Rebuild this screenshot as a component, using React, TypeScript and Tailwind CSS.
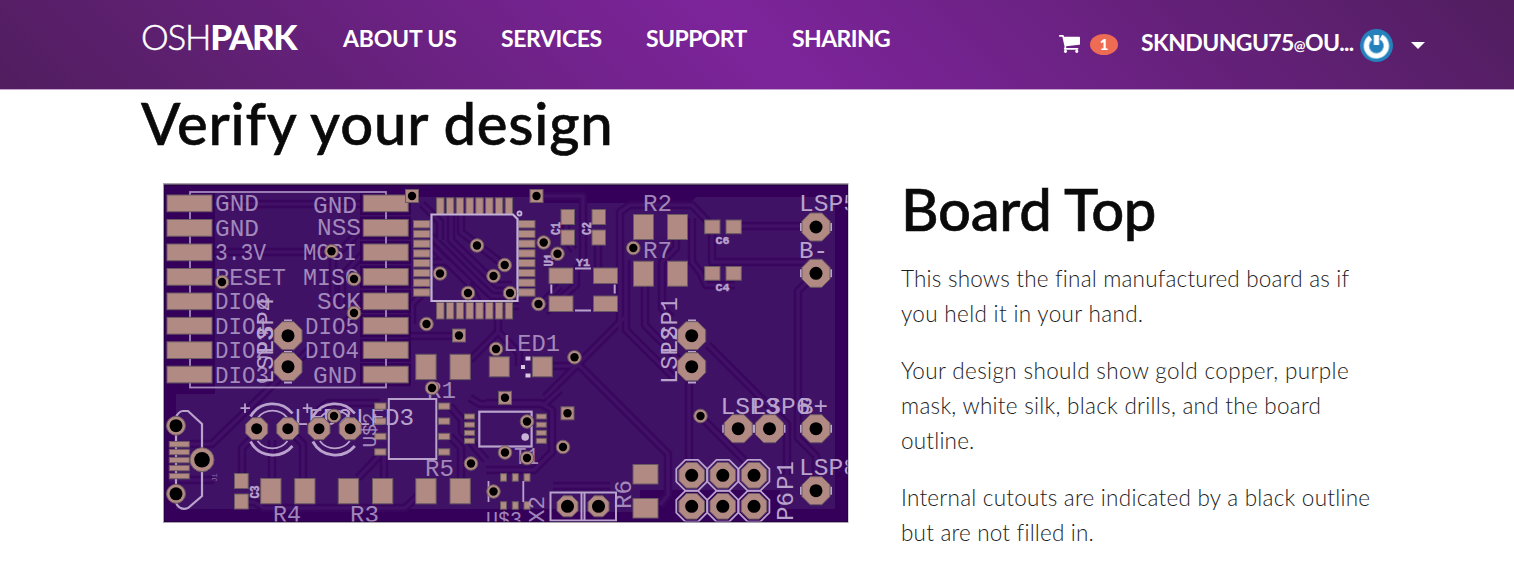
import React from "react";

const PAD = "#b28a84";
const EDGE = "#6a5a62";
const SILK = "#b9a3cd";
const DARK = "#35005a";
const POUR = "#3f1266";

type Pt = [number, number];

function Pad({ x, y, w, h }: { x: number; y: number; w: number; h: number }) {
  return <rect x={x} y={y} width={w} height={h} fill={PAD} stroke={EDGE} strokeWidth={1} />;
}

function octagon(cx: number, cy: number, r: number) {
  const k = r * 0.414;
  return [
    [-k, -r], [k, -r], [r, -k], [r, k], [k, r], [-k, r], [-r, k], [-r, -k],
  ].map(([dx, dy]) => `${cx + dx},${cy + dy}`).join(" ");
}

function Oct({ x, y, r = 14, hole = 6.5 }: { x: number; y: number; r?: number; hole?: number }) {
  return (
    <g>
      <polygon points={octagon(x, y, r)} fill={PAD} stroke={EDGE} />
      <circle cx={x} cy={y} r={hole} fill="#000" />
    </g>
  );
}

function Round({ x, y, r = 6.8, hole = 4.2 }: { x: number; y: number; r?: number; hole?: number }) {
  return (
    <g>
      <circle cx={x} cy={y} r={r} fill={PAD} stroke={EDGE} />
      <circle cx={x} cy={y} r={hole} fill="#000" />
    </g>
  );
}

function Silk({ x, y, t, w, size = 24.5, rot = false, bold = false, o = 0.82 }: {
  x: number; y: number; t: string; w: number; size?: number; rot?: boolean; bold?: boolean; o?: number;
}) {
  return (
    <text
      x={x}
      y={y}
      fill={SILK}
      stroke={bold ? SILK : "none"}
      strokeWidth={bold ? 0.5 : 0}
      opacity={o}
      fontSize={size}
      fontWeight={bold ? 700 : 400}
      fontFamily='"Liberation Mono", monospace'
      textLength={w}
      lengthAdjust="spacingAndGlyphs"
      transform={rot ? `rotate(-90 ${x} ${y})` : undefined}
    >
      {t}
    </text>
  );
}

const rows = [195, 219.5, 244, 268.5, 293, 317.4, 341.8, 366.2];
const eight = [0, 1, 2, 3, 4, 5, 6, 7];

const leftLabels: [string, number][] = [
  ["GND", 44], ["GND", 44], ["3.3V", 51], ["RESET", 71], ["DIO0", 54], ["DIO1", 54], ["DIO2", 54], ["DIO3", 54],
];
const rightLabels: [string, number, number, number][] = [
  ["GND", 313, 44, 213], ["NSS", 317, 44, 235], ["MOSI", 303, 54, 260], ["MISO", 303, 56, 285],
  ["SCK", 317, 44, 309], ["DIO5", 305, 54, 334], ["DIO4", 305, 54, 358], ["GND", 313, 44, 382.5],
];

const vias: Pt[] = [
  [477, 245.5], [440, 273.5], [504.7, 265], [493.5, 276], [468, 293], [510, 293], [543.7, 242.5], [557.5, 253.7],
  [538.5, 304], [426.5, 324], [496, 349], [574.5, 357.3], [331.5, 251.3], [222, 282], [354, 279], [354, 313],
  [633.3, 248], [432, 388], [563, 447], [471, 463.5], [505, 452.5], [527, 421.5], [527, 458], [493.5, 491.5],
  [334, 416], [700.5, 416],
];
const squareVias: Pt[] = [[412, 196], [536.5, 196], [459, 335.5], [505, 397.8], [567.5, 413.3]];

const traces = [
  "M212 204H363", "M212 252H331",
  "M422 204L440 222V240", "M451 214V240L497 285H512", "M461 214V232L504 265",
  "M431 236L480 285L492 296H519", "M431 246L468 283L480 306H519", "M431 262H448L470 283",
  "M541 196H583V262L576 270V285L545 312", "M431 285L412 304V324",
  "M363 254L342 276V310", "M363 228L333 258V310",
  "M363 303L340 330",
  "M498 319V332L519 353V366", "M498 332L470 360", "M545 300L560 286",
  "M408 336H459", "M566 224V240L574 250", "M598 245V268",
  "M620 330V212L630 205H692L712 226", "M692 218V262L700 272L706 285H735",
  "M741 226H806", "M712 234V262H806",
  "M676 240V248L662 262V308L672 318",
  "M645 286V325L689 370V475", "M626 260V330L674 378",
  "M708 345L787 424V475",
  "M816 273L798 291V438L816 456V480", "M626 316L545 397",
  "M553 366H580L668 454V495L660 505",
  "M700 416L754 470",
  "M214 480H169", "M189 444H212L313 346",
  "M242 473V448L256 434", "M272 478V440", "M303 478V444L288 429",
  "M319 429V410L328 403H380", "M380 455L358 478", "M384 455V478",
  "M241 502H254L264 508H405L420 494",
  "M450 406L462 420V432L486 460",
  "M450 436L461 448V478",
  "M470 398L480 404H545L560 390",
  "M486 470H534L552 452V410L540 403H486", "M553 486H610",
];

function Board() {
  return (
    <svg viewBox="163 183 686 341" className="block h-[341px] w-[686px]">
      <rect x="163" y="183" width="686" height="341" fill="#fff" />
      <rect x="163" y="183" width="685.5" height="340" fill="#aaa3ad" />
      <rect x="164" y="184.5" width="684" height="337.5" fill="#1c0030" />
      <svg x="164.500" y="185.500" width="683" height="336" viewBox="164.500 185.500 683 336">
        <rect x="164" y="185" width="684" height="337" fill={DARK} />
        <path
          d="M215 193H384V197H544V203H690L696 197H835V509H780V490H640V512H560V509H176V394H215Z"
          fill={POUR}
        />
        <g fill="none" strokeLinejoin="round">
          {traces.map((d) => <path key={d} d={d} stroke="#38065d" strokeWidth={8.5} />)}
          {traces.map((d) => <path key={d} d={d} stroke="#401166" strokeWidth={3.6} />)}
        </g>

        {/* Radio module footprint */}
        {rows.map((y) => (
          <g key={y}>
            <rect x="165" y={y - 3} width="50" height="23" fill={DARK} />
            <rect x="360" y={y - 3} width="51" height="23" fill={DARK} />
          </g>
        ))}
        <rect x="190" y="192" width="196" height="195.500" fill="none" stroke={SILK} strokeWidth="1.8" opacity={0.85} />
        {rows.map((y, i) => (
          <g key={y}>
            <Pad x={167} y={y} w={45} h={16.7} />
            <Pad x={363.2} y={y} w={45} h={16.7} />
            <Silk x={215} y={y + 16.3} t={leftLabels[i][0]} w={leftLabels[i][1]} />
          </g>
        ))}
        {rightLabels.map(([t, x, w, y]) => <Silk key={y} x={x} y={y} t={t} w={w} />)}
        <Silk x={273} y={384} t="LSP3" w={57} rot o={1} />
        <Silk x={273} y={354} t="LSP4" w={57} rot o={1} />
        <path d="M284 320.500h8M284 352h8M284 382.500h8" stroke={SILK} strokeWidth="2" />
        <Oct x={288} y={335.7} />
        <Oct x={288} y={366.7} />

        {/* Microcontroller */}
        {eight.map((i) => (
          <g key={i}>
            <Pad x={436.6 + i * 9.8} y={197.8} w={7.4} h={16.5} />
            <Pad x={436.6 + i * 9.8} y={302.5} w={7.4} h={16.5} />
            <Pad x={413.5} y={220.5 + i * 9.75} w={16.5} h={7.4} />
            <Pad x={518.5} y={220.5 + i * 9.75} w={16.5} h={7.4} />
          </g>
        ))}
        <path d="M431.500 214.500H513L517.500 219V301H431.500Z" fill="none" stroke="#c4b2d5" strokeWidth="2.200" />
        <circle cx="519.500" cy="213.500" r="2" fill="none" stroke="#c4b2d5" strokeWidth="1.800" />

        {/* Crystal and decoupling capacitors */}
        <Pad x={561} y={209.5} w={13.5} h={15} />
        <Pad x={561} y={230} w={13.5} h={15} />
        <Pad x={592} y={209.5} w={13.5} h={15} />
        <Pad x={592} y={230} w={13.5} h={15} />
        <Silk x={559.5} y={235} t="C1" w={13} size={13} rot bold o={1} />
        <Silk x={590.5} y={235} t="C2" w={13} size={13} rot bold o={1} />
        <Silk x={553} y={266.5} t="U1" w={13} size={12} rot bold o={1} />
        <Silk x={576} y={266} t="Y1" w={14} size={11} bold o={1} />
        <Pad x={549} y={268} w={24} h={15.5} />
        <Pad x={593.5} y={268} w={24} h={15.5} />
        <Pad x={549} y={296} w={24} h={15.5} />
        <Pad x={593.5} y={296} w={24} h={15.5} />
        <path d="M575 268.500h16M575 310.500h16M551.300 284.500v9M614.700 284.500v9" stroke={SILK} strokeWidth="2" />

        {/* Right-hand passives */}
        <Silk x={643} y={211} t="R2" w={29} />
        <Silk x={643} y={257.5} t="R7" w={29} />
        <Pad x={633.5} y={214.5} w={20} h={25} />
        <Pad x={667.5} y={214.5} w={20} h={25} />
        <Pad x={633.5} y={261.2} w={20} h={25} />
        <Pad x={667.5} y={261.2} w={20} h={25} />
        {[220, 266.5].map((y, i) => (
          <g key={y}>
            <Pad x={704.7} y={y} w={15.3} h={13.7} />
            <Pad x={726} y={y} w={15.3} h={13.7} />
            <Silk x={715.5} y={y + 24.2} t={i === 0 ? "C6" : "C4"} w={14} size={11.5} bold o={1} />
          </g>
        ))}
        <Silk x={799} y={211} t="LSP5" w={59} o={1} />
        <Silk x={799} y={257.5} t="B-" w={29} o={1} />
        <Silk x={720.5} y={413.5} t="LSP3" w={59} o={1} />
        <Silk x={751.5} y={413.5} t="LSP6" w={59} o={1} />
        <Silk x={799} y={413.5} t="B+" w={29} o={1} />
        <Silk x={799} y={475} t="LSP8" w={59} o={1} />
        {([[816, 227], [816, 273.3], [738.2, 428.7], [769.5, 428.7], [816, 428.7], [816, 490.7]] as Pt[]).map(([x, y]) => (
          <g key={`${x}-${y}`}>
            <path d={`M${x - 15} ${y - 4}v8M${x + 15} ${y - 4}v8`} stroke={SILK} strokeWidth="2" />
            <Oct x={x} y={y} />
          </g>
        ))}
        <Silk x={677} y={384} t="LSP2" w={57} rot o={1} />
        <Silk x={677} y={354} t="LSP1" w={57} rot o={1} />
        <path d="M688 320.500h8M688 352h8M688 382.500h8" stroke={SILK} strokeWidth="2" />
        <Oct x={691.7} y={335.7} />
        <Oct x={691.7} y={366.7} />

        {/* Indicator LEDs */}
        <Silk x={503} y={351} t="LED1" w={57} />
        <Pad x={415.8} y={354.3} w={20.3} h={25.3} />
        <Pad x={450} y={354.3} w={20.3} h={25.3} />
        <Pad x={489.3} y={356.8} w={20} h={20} />
        <Pad x={532.3} y={356.8} w={20} h={20} />
        <path d="M525.500 356.500h5v4h-5zM521 365h4v4h-4zM525.500 373.500h5v4h-5z" fill="#d8c8e0" />
        <Silk x={427} y={398} t="R1" w={29} />
        <Silk x={294} y={424.5} t="LED2" w={58} o={1} />
        <Silk x={356} y={424.5} t="LED3" w={58} o={1} />
        {[272.5, 334.8].map((x) => (
          <g key={x} fill="none" stroke={SILK}>
            <path d={`M${x - 27.5} 403.500v9.500M${x - 32} 408.200h9.500`} strokeWidth="1.800" />
            <path
              d={`M${x - 22} 416.500A25.500 25.500 0 0 1 ${x + 20} 413.500M${x - 22} 441.500A25.500 25.500 0 0 0 ${x + 20} 446`}
              strokeWidth="2.800"
            />
            <path
              d={`M${x - 15} 418A19 19 0 0 1 ${x + 15} 418M${x - 15} 441A19 19 0 0 0 ${x + 15} 441`}
              strokeWidth="1.800"
            />
          </g>
        ))}
        {[256.7, 287.8, 319, 350.2].map((x) => <Oct key={x} x={x} y={428.7} r={11} hole={5.5} />)}

        {/* USB connector */}
        <path
          d="M176 417Q179 411 183 411H188L202 424V496L188 508Q180 511 176 503M176 434V485"
          fill="none"
          stroke={SILK}
          strokeWidth="2.200"
        />
        {[441.5, 449.3, 457.3, 465.3, 473.3].map((y) => <Pad key={y} x={169.3} y={y} w={20} h={5.5} />)}
        <Round x={176} y={425.7} r={9.5} hole={6.5} />
        <Round x={176} y={493.8} r={9.5} hole={6.5} />
        <Round x={202} y={459.7} r={12} hole={7.8} />
        <Silk x={217} y={481.5} t="J1" w={8} size={8} rot o={0.6} />

        {/* Bottom row passives */}
        <Pad x={234.5} y={473.5} w={13.7} h={15} />
        <Pad x={234.5} y={494} w={13.7} h={15} />
        <Silk x={259} y={498.5} t="C3" w={13} size={12} rot bold o={1} />
        {[260.7, 294.7, 338.3, 372.5, 415.8, 450].map((x) => <Pad key={x} x={x} y={478.5} w={20.3} h={25.3} />)}
        <Silk x={273} y={522} t="R4" w={28} />
        <Silk x={350} y={522} t="R3" w={29} />
        <Silk x={425} y={475.5} t="R5" w={29} />

        {/* Driver ICs */}
        {[403, 418, 433.3, 448.8].map((y) => (
          <g key={y}>
            <Pad x={374.7} y={y} w={11.3} h={6.3} />
            <Pad x={438.5} y={y} w={11.3} h={6.3} />
          </g>
        ))}
        <rect x="388.800" y="399" width="47.500" height="60" fill="none" stroke={SILK} strokeWidth="2" />
        <Silk x={376} y={447.5} t="U$2" w={35} size={20} rot />
        {[414, 422.2, 430.3, 438.3].map((y) => (
          <g key={y}>
            <Pad x={464.5} y={y} w={10} h={5} />
            <Pad x={536.3} y={y} w={10} h={5} />
          </g>
        ))}
        <rect x="479.300" y="411.700" width="52.300" height="34.800" fill="none" stroke={SILK} strokeWidth="2.200" />
        <circle cx="525.200" cy="437" r="3.800" fill="#c8b4d4" />
        <Silk x={514} y={464} t="T1" w={25} />
        {[501, 512.8, 524.5].map((x) => (
          <g key={x}>
            <Pad x={x - 0.5} y={473.7} w={6} h={7.5} />
            <Pad x={x - 0.5} y={501.7} w={6} h={7.5} />
          </g>
        ))}
        <path d="M488.500 481v21M523.300 481v21" stroke={SILK} strokeWidth="1.800" />
        <Silk x={486} y={527} t="U$3" w={36} size={22} />
        <Silk x={544} y={523} t="X2" w={27} size={22} rot />
        <path d="M550.500 492.500H616V520.500H550.500ZM581.500 492.500V520.500M584.500 492.500V520.500" fill="none" stroke={SILK} strokeWidth="2" />
        <Oct x={567.5} y={506.3} r={10.5} />
        <Oct x={598.5} y={506.3} r={10.5} />
        <Silk x={630.5} y={509} t="R6" w={29} rot />
        <Pad x={633} y={464.5} w={25} h={19.5} />
        <Pad x={633} y={498.5} w={25} h={19.5} />

        {/* Programming header */}
        {[691.7, 722.8, 754].map((x) => [475.3, 506.3].map((y) => (
          <g key={`${x}-${y}`}>
            <polygon points={octagon(x, y, 15.4)} fill="none" stroke={SILK} strokeWidth="1.800" />
            <Oct x={x} y={y} r={12.8} />
          </g>
        )))}
        <Silk x={793} y={521} t="P6" w={29} rot o={1} />
        <Silk x={793} y={490} t="P1" w={29} rot o={1} />

        {squareVias.map(([x, y]) => (
          <g key={x}>
            <Pad x={x - 6.5} y={y - 6.5} w={13} h={13} />
            <circle cx={x} cy={y} r="4.200" fill="#000" />
          </g>
        ))}
        {vias.map(([x, y]) => <Round key={`${x}-${y}`} x={x} y={y} />)}
      </svg>
    </svg>
  );
}

function CartIcon() {
  return (
    <svg viewBox="0 256 1664 1408" className="h-[18px] w-[21px]" fill="#fff">
      <path d="M640 1536q0 52-38 90t-90 38-90-38-38-90 38-90 90-38 90 38 38 90zm896 0q0 52-38 90t-90 38-90-38-38-90 38-90 90-38 90 38 38 90zm128-1088v512q0 24-16.500 42.500t-40.500 21.500l-1044 122q13 60 13 70 0 16-24 64h920q26 0 45 19t19 45-19 45-45 19h-1024q-26 0-45-19t-19-45q0-11 8-31.500t16-36 21.500-40 15.500-29.500l-177-823h-204q-26 0-45-19t-19-45 19-45 45-19h256q16 0 28.500 6.500t19.500 15.500 13 24.500 8 26 5.500 29.500 4.500 26h1201q26 0 45 19t19 45z" />
    </svg>
  );
}

function Header() {
  return (
    <header className="flex h-[90px] items-start border-b border-[#c4a3cd] bg-[linear-gradient(45deg,#511e5f_0%,#7d249b_50%,#511e5f_100%)] bg-origin-border pl-[141px] text-white">
      <div className="mt-[14px] flex h-[45px] w-[202px] items-center whitespace-nowrap text-[35px] leading-[45px]">
        <span className="font-light tracking-[-1.2px] [-webkit-text-stroke:0.5px_white]">OSH</span>
        <span className="font-black tracking-[-1.5px]">PARK</span>
      </div>
      <nav className="mt-[23px] flex whitespace-nowrap text-[23px] font-bold leading-[30px]">
        <a className="w-[158px] tracking-[-0.2px]">ABOUT US</a>
        <a className="w-[145px] tracking-[-0.4px]">SERVICES</a>
        <a className="w-[146px] tracking-[-0.6px]">SUPPORT</a>
        <a className="w-[267px] tracking-[-0.6px]">SHARING</a>
      </nav>
      <div className="mt-[28px] flex h-[34px] items-center">
        <div className="-mt-[2px]"><CartIcon /></div>
        <span className="-mt-[1px] ml-[10px] flex h-[21px] w-[28px] items-center justify-center rounded-[50%] bg-[#ee6c54] text-[15px] font-black">1</span>
        <span className="-mt-[5px] ml-[23px] flex w-[219px] items-baseline whitespace-nowrap text-[23px] font-bold tracking-[-0.6px]">
          SKNDUNGU75<span className="text-[14px]">@</span>OU...
        </span>
        <svg viewBox="0 0 33 33" className="h-[33px] w-[33px]">
          <circle cx="16.500" cy="16.500" r="16.500" fill="#2481bb" />
          <path d="M10.500 8.800A10 10 0 1 0 21 8M16.500 6V16" fill="none" stroke="#8cc3e2" strokeWidth="6.200" />
          <path d="M10.500 8.800A10 10 0 1 0 21 8M16.500 6V16" fill="none" stroke="#fff" strokeWidth="4.400" />
        </svg>
        <svg viewBox="0 0 14 7" className="ml-[18px] h-[7px] w-[14px]"><path d="M0 0H14L7 7Z" fill="#fff" /></svg>
      </div>
    </header>
  );
}

export default function App() {
  return (
    <div className="h-[571px] w-[1514px] overflow-hidden bg-white font-['Lato',sans-serif] text-[#0a0a0a]">
      <Header />
      <main className="pl-[141px]">
        <h1 className="-mt-[3px] h-[96px] whitespace-nowrap text-[58px] font-medium leading-[72px] tracking-[0.8px] [-webkit-text-stroke:0.6px_#0a0a0a]">Verify your design</h1>
        <div className="flex">
          <div className="ml-[22px] w-[738px]"><Board /></div>
          <section>
            <h2 className="-mt-[10px] whitespace-nowrap text-[58px] font-medium leading-[72px] tracking-[-0.3px] [-webkit-text-stroke:0.6px_#0a0a0a]">Board Top</h2>
            <div className="mt-[16px] flex flex-col gap-[22px] whitespace-nowrap text-[22.5px] font-light leading-[35px] text-[#1c1c1c]">
              <p><span className="tracking-[0.2px]">This shows the final manufactured board as if</span><br /><span className="tracking-[0.33px]">you held it in your hand.</span></p>
              <p><span className="tracking-[0.36px]">Your design should show gold copper, purple</span><br /><span className="tracking-[0.27px]">mask, white silk, black drills, and the board</span><br /><span className="tracking-[0.2px]">outline.</span></p>
              <p><span className="tracking-[0.25px]">Internal cutouts are indicated by a black outline</span><br /><span className="tracking-[0.2px]">but are not filled in.</span></p>
            </div>
          </section>
        </div>
      </main>
    </div>
  );
}
